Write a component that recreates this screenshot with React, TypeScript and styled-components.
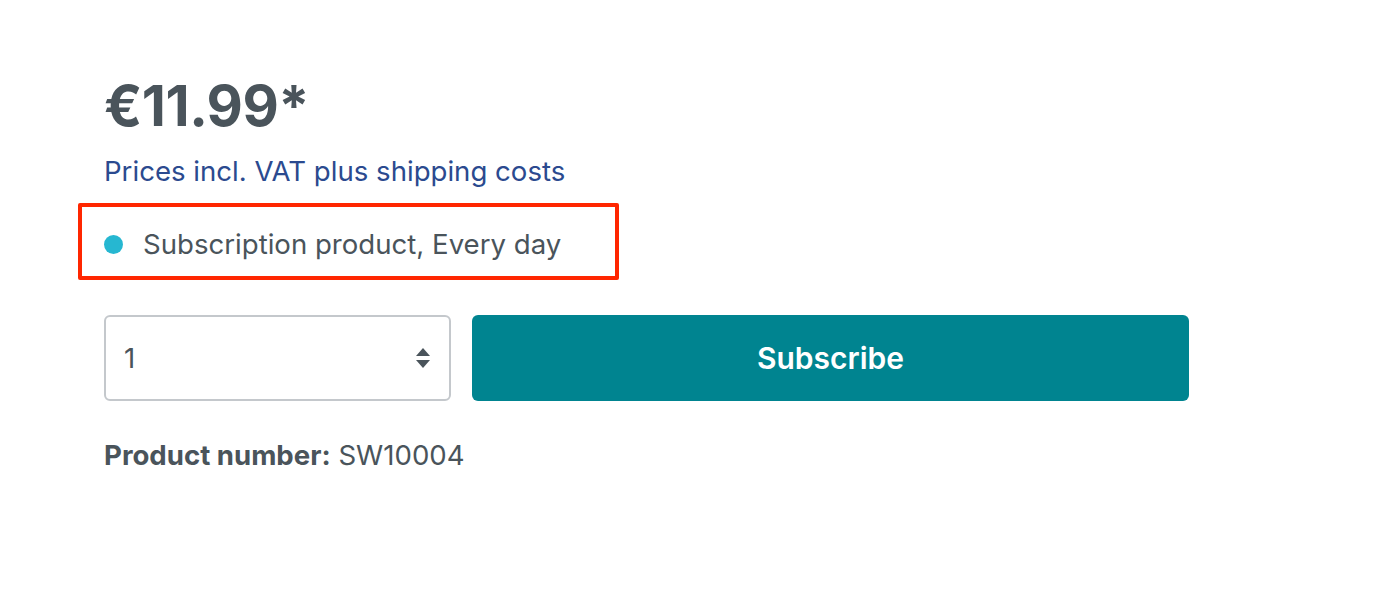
import styled, { createGlobalStyle } from 'styled-components';

const GlobalStyle = createGlobalStyle`
  body {
    margin: 0;
    background: #fff;
    font-family: Inter, "Noto Sans", sans-serif;
    color: #4a545b;
  }
`;

export default function App() {
  return (
    <>
      <GlobalStyle />
      <BuyBox>
        <Price>€11.99*</Price>
        <TaxLink>Prices incl. VAT plus shipping costs</TaxLink>
        <Highlight>
          <Dot />
          <SubscriptionText>Subscription product, Every day</SubscriptionText>
        </Highlight>
        <BuyRow>
          <QuantitySelect>
            <span>1</span>
            <Arrows viewBox="0 0 16 22">
              <path d="M8 1 L15 9 H1 Z" fill="#4a545b" />
              <path d="M8 21 L15 13 H1 Z" fill="#4a545b" />
            </Arrows>
          </QuantitySelect>
          <SubscribeButton>Subscribe</SubscribeButton>
        </BuyRow>
        <ProductNumber>
          <strong>Product number:</strong> SW10004
        </ProductNumber>
      </BuyBox>
    </>
  );
}

const BuyBox = styled.div`
  padding: 73px 0 0 104px;
  display: flex;
  flex-direction: column;
  align-items: flex-start;
`;

const Price = styled.div`
  font-size: 56px;
  font-weight: 700;
  line-height: 67px;
  letter-spacing: -0.5px;
`;

const TaxLink = styled.a`
  margin-top: 14px;
  font-size: 27.6px;
  line-height: 34px;
  color: #2b4a8f;
  text-decoration: none;
`;

const Highlight = styled.div`
  margin-top: 15px;
  margin-left: -26px;
  box-sizing: border-box;
  width: 541px;
  height: 77px;
  border: 4px solid #ff2600;
  border-radius: 2px;
  display: flex;
  align-items: center;
  padding: 5px 0 0 22px;
  gap: 20px;
`;

const Dot = styled.span`
  width: 19px;
  height: 19px;
  border-radius: 50%;
  background: #26b7d1;
  flex-shrink: 0;
`;

const SubscriptionText = styled.span`
  font-size: 27.6px;
  line-height: 34px;
`;

const BuyRow = styled.div`
  margin-top: 35px;
  display: flex;
  gap: 21px;
`;

const QuantitySelect = styled.div`
  width: 347px;
  height: 86px;
  box-sizing: border-box;
  border: 2px solid #c4c8cc;
  border-radius: 6px;
  display: flex;
  align-items: center;
  justify-content: space-between;
  padding: 0 18px;
  font-size: 27.6px;
`;

const Arrows = styled.svg`
  width: 16px;
  height: 22px;
`;

const SubscribeButton = styled.button`
  width: 717px;
  height: 86px;
  border: none;
  border-radius: 6px;
  background: #008490;
  color: #fff;
  font-family: Inter, "Noto Sans", sans-serif;
  font-size: 30px;
  font-weight: 600;
  cursor: pointer;
`;

const ProductNumber = styled.div`
  margin-top: 37px;
  font-size: 27.6px;
  line-height: 34px;

  strong {
    font-weight: 700;
  }
`;
